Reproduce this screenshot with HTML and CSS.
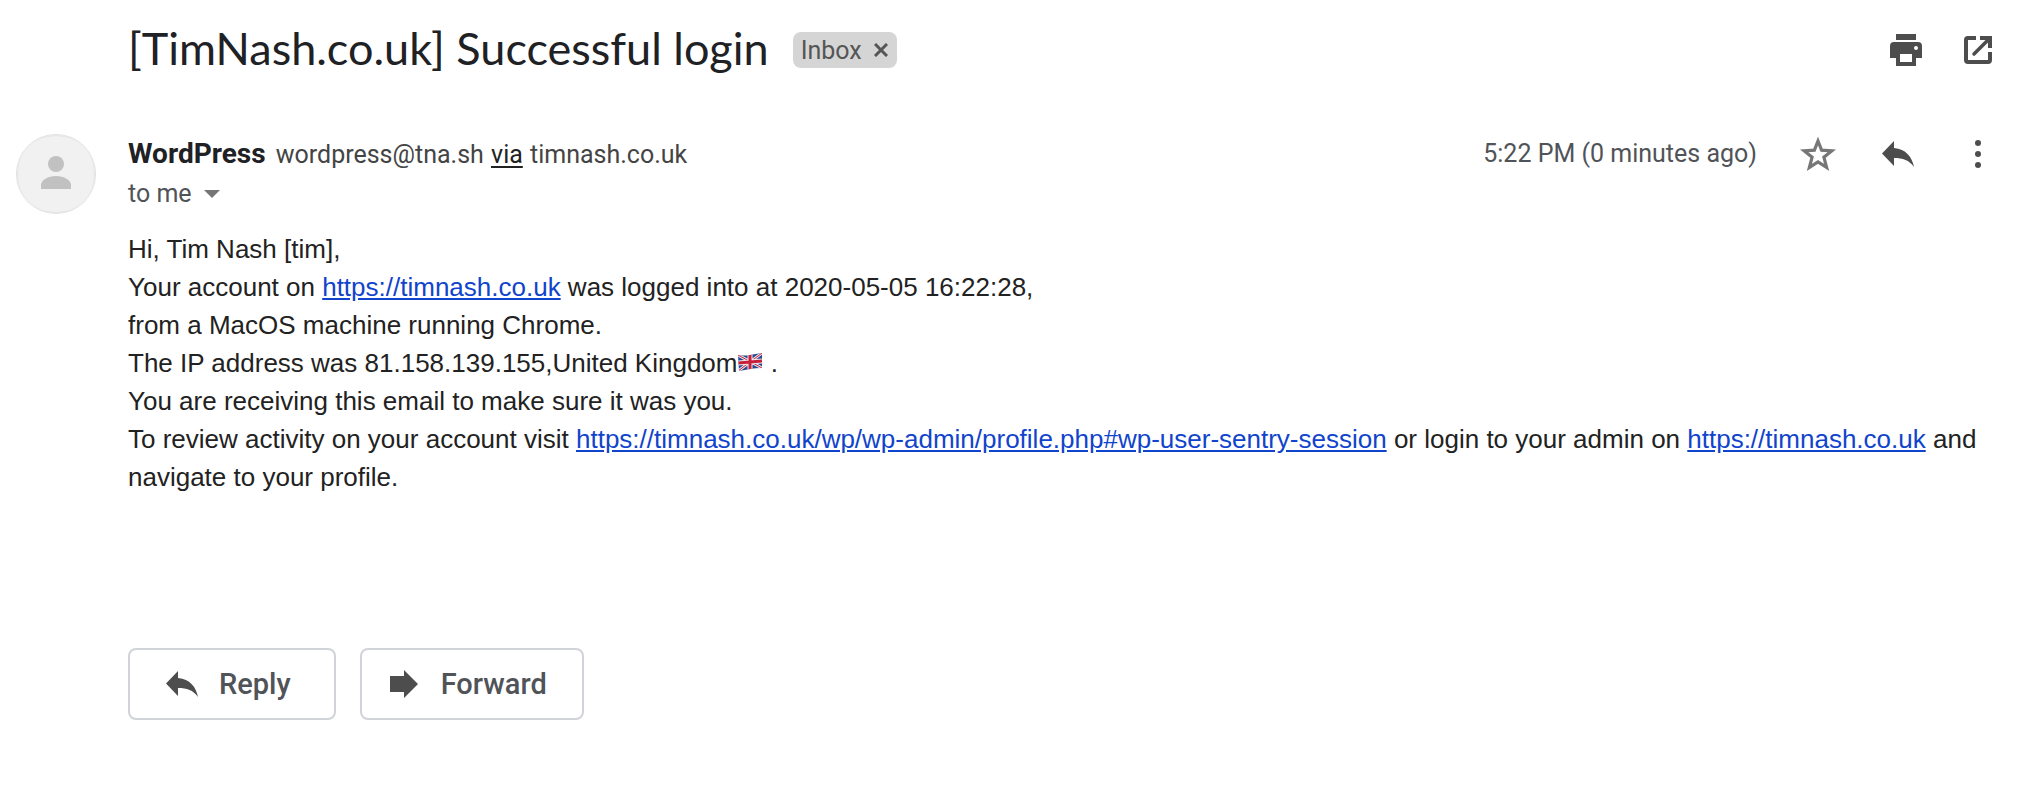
FILE: index.html
```html
<!DOCTYPE html>
<html lang="en">
<head>
<meta charset="utf-8">
<meta name="viewport" content="width=device-width, initial-scale=1">
<title>[TimNash.co.uk] Successful login</title>
<link rel="stylesheet" href="styles.css">
</head>
<body>
<main class="mail">
  <header class="subject-bar">
    <h1 class="subject">[TimNash.co.uk] Successful login</h1>
    <span class="chip">Inbox
      <button class="chip-close" type="button" aria-label="Remove Inbox label">
        <svg width="14" height="14" viewBox="0 0 14 14"><path d="M1 1l12 12M13 1L1 13" stroke="#555" stroke-width="3" fill="none"/></svg>
      </button>
    </span>
    <div class="tools">
      <button class="icon-button" type="button" aria-label="Print all">
        <svg width="32" height="32" viewBox="0 0 32 32"><path fill="#4d4d4d" fill-rule="evenodd" d="M6 0h20v6H6zM4 8h24a4 4 0 0 1 4 4v12h-6v8H6v-8H0V12a4 4 0 0 1 4-4zm6 12v8h12v-8zm16-8a2 2 0 1 0 0 4 2 2 0 0 0 0-4z"/></svg>
      </button>
      <button class="icon-button" type="button" aria-label="In new window">
        <svg width="28" height="28" viewBox="0 0 28 28"><path fill="none" stroke="#4d4d4d" stroke-width="4" d="M12 2H4a2 2 0 0 0-2 2v20a2 2 0 0 0 2 2h20a2 2 0 0 0 2-2v-8"/><path fill="none" stroke="#4d4d4d" stroke-width="3.500" stroke-linecap="round" d="M10 18L25 3"/><path fill="#4d4d4d" d="M16 0h12v12h-4V4h-8z"/></svg>
      </button>
    </div>
  </header>
  <article class="message">
    <svg class="avatar" viewBox="0 0 80 80" role="img" aria-label="WordPress"><circle cx="40" cy="40" r="40" fill="#dedede"/><path fill="#f1f1f1" d="M15 9Q26 2 40 2t25 7l6 6q7 9 7 25t-7 25l-6 6q-11 7-25 7t-25-7l-6-6Q2 56 2 40t7-25z"/><circle cx="40" cy="40" r="39" fill="none" stroke="#ebebeb"/><circle cx="40" cy="30" r="8" fill="#c1c1c1"/><path fill="#c1c1c1" d="M25 55v-4c0-5 7-9 15-9s15 4 15 9v4z"/></svg>
    <div class="content">
      <div class="meta">
        <p class="sender"><strong class="name">WordPress</strong> wordpress@tna.sh <a class="via" href="#via">via</a> timnash.co.uk</p>
        <span class="time">5:22 PM (0 minutes ago)</span>
        <button class="icon-button star" type="button" aria-label="Star">
          <svg width="36" height="34" viewBox="0 0 36 34"><path fill="none" stroke="#777" stroke-width="3.200" d="M18 4l3.600 9.200 10.200.7-7.900 6.300 2.700 10.200L18 24.800l-8.600 5.600 2.700-10.200-7.900-6.300 10.200-.7z"/></svg>
        </button>
        <button class="icon-button" type="button" aria-label="Reply">
          <svg width="32" height="26" viewBox="0 0 32 26"><path fill="#4d4d4d" d="M12 7V0L0 12.500 12 25v-8c9 0 15 2 20 9C30 16 24 8 12 7z"/></svg>
        </button>
        <button class="icon-button more" type="button" aria-label="More">
          <svg width="6" height="28" viewBox="0 0 6 28"><g fill="#4d4d4d"><circle cx="3" cy="3" r="3"/><circle cx="3" cy="14" r="3"/><circle cx="3" cy="25" r="3"/></g></svg>
        </button>
      </div>
      <div class="recipient">to me
        <button class="details" type="button" aria-label="Show details">
          <svg width="16" height="8" viewBox="0 0 16 8"><path fill="#757575" d="M0 0h16L8 8z"/></svg>
        </button>
      </div>
      <div class="body">
        <p>Hi, Tim Nash [tim],</p>
        <p>Your account on <a href="https://timnash.co.uk">https://timnash.co.uk</a> was logged into at 2020-05-05 16:22:28,</p>
        <p>from a MacOS machine running Chrome.</p>
        <p>The IP address was 81.158.139.155,United Kingdom<svg class="flag" viewBox="0 0 24 18" role="img" aria-label="United Kingdom flag"><defs><clipPath id="wave"><path d="M0 2q7 1 12 0t12-2v15q-7 0-12 1T1 18z"/></clipPath></defs><g clip-path="url(#wave)"><path fill="#29458e" d="M0 0h24v18H0z"/><path stroke="#e6dfe8" stroke-width="3" d="M0 2l24 13M24 0L0 18"/><path stroke="#c8283f" stroke-width="1" d="M0 2l24 13M24 0L0 18"/><path stroke="#f0e9ef" stroke-width="5" d="M12 0v18M0 10l24-2"/><path stroke="#c8203a" stroke-width="3" d="M12 0v18M0 10l24-2"/></g></svg> .</p>
        <p>You are receiving this email to make sure it was you.</p>
        <p>To review activity on your account visit <a href="https://timnash.co.uk/wp/wp-admin/profile.php#wp-user-sentry-session">https://timnash.co.uk/wp/wp-admin/profile.php#wp-user-sentry-session</a> or login to your admin on <a href="https://timnash.co.uk">https://timnash.co.uk</a> and navigate to your profile.</p>
      </div>
      <div class="actions">
        <button class="action reply" type="button">
          <svg width="32" height="26" viewBox="0 0 32 26"><path fill="#4d4d4d" d="M12 7V0L0 12.500 12 25v-8c9 0 15 2 20 9C30 16 24 8 12 7z"/></svg>
          Reply
        </button>
        <button class="action forward" type="button">
          <svg width="28" height="28" viewBox="0 0 28 28"><path fill="#4d4d4d" d="M0 6h14V0l14 14-14 14v-6H0z"/></svg>
          Forward
        </button>
      </div>
    </div>
  </article>
</main>
</body>
</html>
```
FILE: styles.css
```css
* {
  box-sizing: border-box;
}

body {
  margin: 0;
  background: #fff;
  color: #202124;
  font-family: Roboto, "Liberation Sans", sans-serif;
}

h1,
p {
  margin: 0;
}

button {
  padding: 0;
  border: 0;
  background: none;
  color: inherit;
  font: inherit;
  cursor: pointer;
}

svg {
  display: block;
  flex: none;
}

.mail {
  padding: 20px 24px 24px 16px;
}

.subject-bar {
  display: flex;
  align-items: center;
  gap: 24px;
  min-height: 60px;
  padding-left: 112px;
}

.subject {
  padding-bottom: 4px;
  font-family: Lato, Roboto, sans-serif;
  font-size: 45px;
  font-weight: 400;
  line-height: 56px;
}

.chip {
  display: flex;
  align-items: center;
  gap: 12px;
  height: 36px;
  padding: 0 9px 0 8px;
  border-radius: 8px;
  background: #d5d5d5;
  color: #555;
  font-size: 25px;
}

.tools {
  display: flex;
  align-items: center;
  gap: 42px;
  margin-left: auto;
  padding-right: 2px;
}

.message {
  display: flex;
  align-items: flex-start;
  gap: 32px;
  padding-top: 54px;
}

.avatar {
  width: 80px;
  height: 80px;
}

.content {
  flex: 1;
  min-width: 0;
}

.meta {
  display: flex;
  align-items: center;
  min-height: 40px;
}

.sender,
.time {
  color: #444;
  font-size: 25px;
  line-height: 38px;
}

.sender {
  flex: 1;
}

.name {
  margin-right: 4px;
  color: #202124;
  font-size: 28px;
}

.via {
  margin: 0 1px;
  color: #222;
  text-underline-offset: 3px;
}

.time {
  margin-right: 43px;
  color: #505357;
}

.star {
  margin-right: 46px;
}

.more {
  margin-left: 61px;
  padding-right: 13px;
}

.recipient {
  display: flex;
  align-items: center;
  gap: 12px;
  color: #505357;
  font-size: 25px;
  line-height: 40px;
}

.body {
  padding-top: 16px;
  color: #222;
  font-family: "Liberation Sans", Arial, sans-serif;
  font-size: 26px;
  line-height: 38px;
}

.body a {
  color: #1144cc;
}

.flag {
  display: inline-block;
  width: 24px;
  height: 18px;
  margin: 0 1px;
  vertical-align: 1px;
}

.actions {
  display: flex;
  gap: 24px;
  padding-top: 152px;
}

.action {
  display: flex;
  align-items: center;
  height: 72px;
  border: 2px solid #d0d3d8;
  border-radius: 8px;
  color: #505357;
  font-size: 29px;
  font-weight: 500;
}

.reply {
  gap: 21px;
  padding: 0 43px 0 36px;
}

.forward {
  gap: 23px;
  padding: 0 35px 0 28px;
}
```
